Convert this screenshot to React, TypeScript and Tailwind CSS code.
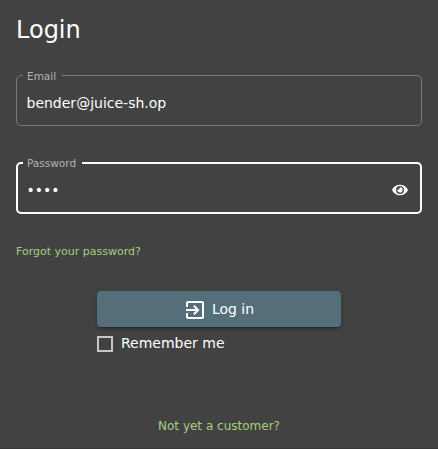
import React, { useState } from "react";
import { FaEye } from "react-icons/fa";
import { MdExitToApp } from "react-icons/md";

interface FieldProps {
  label: string;
  type: string;
  value: string;
  onChange: (value: string) => void;
  className: string;
  rowClassName: string;
  children?: React.ReactNode;
}

const Field = ({ label, type, value, onChange, className, rowClassName, children }: FieldProps) => {
  return (
    <fieldset className={`min-w-0 rounded-[5px] ${className}`}>
      <legend className="h-[13px] pr-1.5 pl-1 text-[10.5px] leading-[15px] text-[#b3b3b3]">
        {label}
      </legend>
      <div className={`flex items-center ${rowClassName}`}>
        <input
          type={type}
          aria-label={label}
          value={value}
          onChange={(e) => onChange(e.target.value)}
          className="min-w-0 flex-1 bg-transparent text-sm text-white outline-none"
        />
        {children}
      </div>
    </fieldset>
  );
};

const App = () => {
  const [email, setEmail] = useState("bender@juice-sh.op");
  const [password, setPassword] = useState("1234");
  const [showPassword, setShowPassword] = useState(false);
  const [remember, setRemember] = useState(false);

  return (
    <div className="flex h-[449px] w-[438px] flex-col border-b border-[#383838] bg-[#424242] px-4 font-['DejaVu_Sans',sans-serif] text-white">
      <h1 className="mt-[14px] text-2xl leading-8">Login</h1>

      <Field
        label="Email"
        type="text"
        value={email}
        onChange={setEmail}
        className="mt-[23px] h-[57px] border border-[#7b7b7b] pr-[10px] pl-[6px]"
        rowClassName="h-[42px] pl-[3.5px]"
      />

      <Field
        label="Password"
        type={showPassword ? "text" : "password"}
        value={password}
        onChange={setPassword}
        className="mt-[30px] h-[58px] border-2 border-white pr-[12px] pl-[5px]"
        rowClassName="h-[41px] pl-[3.5px]"
      >
        <button type="button" aria-label="Show password" onClick={() => setShowPassword(!showPassword)}>
          <FaEye className="h-[14px] w-4" />
        </button>
      </Field>

      <a href="#" className="mt-[30px] self-start text-[11px] leading-4 text-[#a5d07c]">
        Forgot your password?
      </a>

      <div className="mx-auto mt-[31px] flex w-[244px] flex-col">
        <button
          type="button"
          className="flex h-9 items-center justify-center gap-[5px] rounded bg-[#546e7a] pr-px text-sm shadow-[0_3px_1px_-2px_rgba(0,0,0,0.2),0_2px_2px_0_rgba(0,0,0,0.14),0_1px_5px_0_rgba(0,0,0,0.12)]"
        >
          <MdExitToApp className="mt-0.5 size-6" />
          <span>Log in</span>
        </button>
        <label className="mt-1.5 flex h-5 items-center gap-2 text-sm">
          <input
            type="checkbox"
            checked={remember}
            onChange={(e) => setRemember(e.target.checked)}
            className="mt-0.5 size-4 appearance-none border-2 border-[#c6c6c6] checked:bg-[#546e7a]"
          />
          <span>Remember me</span>
        </label>
      </div>

      <a href="#" className="mt-[65px] self-center text-xs leading-4 text-[#a5d07c]">
        Not yet a customer?
      </a>
    </div>
  );
};

export default App;
